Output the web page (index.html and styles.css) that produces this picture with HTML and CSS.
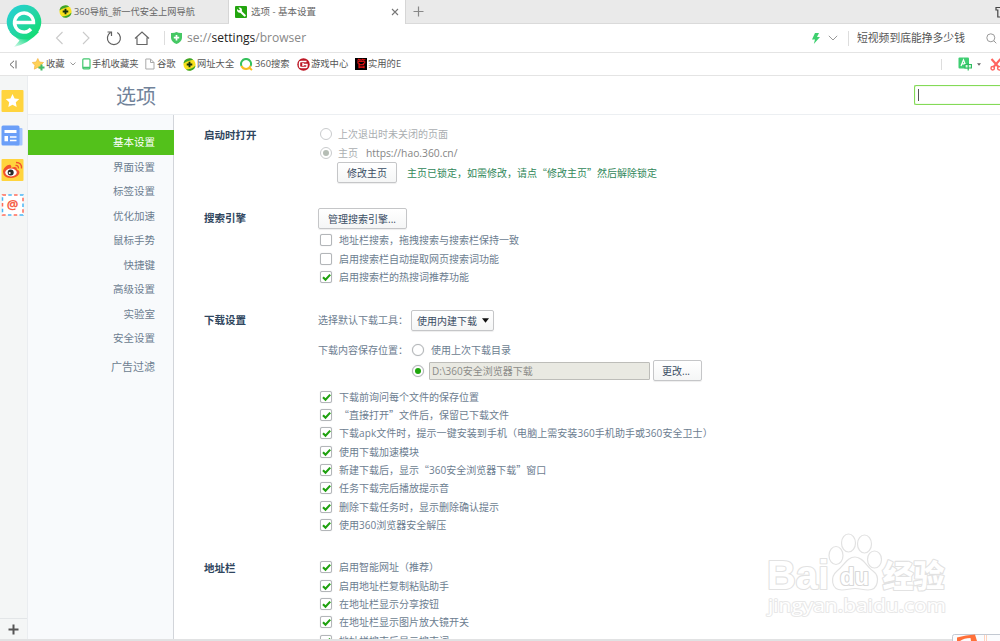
FILE: index.html
```html
<!DOCTYPE html>
<html lang="zh-CN">
<head>
<meta charset="utf-8">
<title>选项 - 基本设置</title>
<link rel="stylesheet" href="styles.css">
</head>
<body>
<svg class="defs" width="0" height="0">
  <defs>
    <symbol id="tick" viewBox="0 0 13 13"><path d="M3 6.2 5.5 8.8 10.2 3.6" fill="none" stroke="#1fa10f" stroke-width="2.1"/></symbol>
    <symbol id="nav360" viewBox="0 0 14 14"><circle cx="7" cy="7" r="6.500" fill="#f7e11c"/><path d="M.500 6A6.500 6.500 0 0 1 11 1.800C8 2.500 4 3.200 .500 6ZM13.500 8A6.500 6.500 0 0 1 3 12.300C7 12 11 11 13.500 8Z" fill="#3aa52c"/><path d="M7 4V10M4 7H10" stroke="#16310e" stroke-width="2"/></symbol>
  </defs>
</svg>

<div class="tabs">
  <div class="tab tab-idle"><svg width="13" height="13"><use href="#nav360"/></svg><span>360导航_新一代安全上网导航</span></div>
  <div class="tab tab-active">
    <svg width="12" height="12" viewBox="0 0 12 12"><rect width="12" height="12" rx="1" fill="#23a50f"/><path d="M5.500 5.500 9.700 9.500" stroke="#fff" stroke-width="2.200" stroke-linecap="round"/><path d="M2 3 4 4.600 5 3.500 3.500 1.700C6 1.200 7.600 3 6.800 5.300L5.300 6.700C3.300 7 1.600 5.500 2 3Z" fill="#fff"/></svg>
    <span class="tab-title">选项 - 基本设置</span>
    <svg width="8" height="8" viewBox="0 0 8 8"><path d="M1 1 7 7M7 1 1 7" stroke="#777" stroke-width="1.100"/></svg>
  </div>
  <div class="tab-new"><svg width="11" height="11" viewBox="0 0 11 11"><path d="M5.500 .500V10.500M.500 5.500H10.500" stroke="#888" stroke-width="1.200"/></svg></div>
  <svg class="skin" width="5" height="12" viewBox="0 0 5 12"><path d="M5 1.500H1V4H2.800V11H5" fill="none" stroke="#444" stroke-width="1.200"/></svg>
</div>

<div class="toolbar">
  <svg class="nav-icons" width="120" height="20" viewBox="0 0 120 20" fill="none">
    <path d="M12.500 4 6.500 10 12.500 16M33 4 39 10 33 16" stroke="#cacaca" stroke-width="1.100"/>
    <path d="M60.500 4.600A6.500 6.500 0 1 0 67.300 4.600M57.500 4H61.500V8" stroke="#606060" stroke-width="1.200"/>
    <path d="M85 10.500 92 4 99 10.500M87 9.500V16.500H97V9.500" stroke="#666" stroke-width="1.200"/>
    <path d="M114.500 3V17" stroke="#ddd"/>
  </svg>
  <svg class="shield" width="11" height="12" viewBox="0 0 11 12"><path d="M0 1Q3.500 1.200 5.500 0Q7.500 1.200 11 1V6Q10.500 10 5.500 12Q.500 10 0 6Z" fill="#45c864"/><path d="M5.500 3V8.500M2.800 5.700H8.200" stroke="#fff" stroke-width="1.700"/></svg>
  <div class="url">se://<b>settings</b>/browser</div>
  <svg class="bolt" width="8" height="11" viewBox="0 0 8 11"><path d="M3 0H7L5 4H8L1.800 11 3 6.500H0Z" fill="#3ed06f"/></svg>
  <svg class="chev" width="10" height="6" viewBox="0 0 10 6"><path d="M.800 .800 5 5 9.200 .800" fill="none" stroke="#999"/></svg>
  <i class="sep"></i>
  <div class="query">短视频到底能挣多少钱</div>
  <svg class="lens" width="11" height="11" viewBox="0 0 11 11"><circle cx="4.800" cy="4.800" r="4" fill="none" stroke="#999"/><path d="M7.700 7.700 10.300 10.300" stroke="#999"/></svg>
</div>

<div class="bookmarks">
  <svg class="collapse" width="8" height="9" viewBox="0 0 8 9"><path d="M5 .800 1 4.500 5 8.200M7 .500V8.500" fill="none" stroke="#666"/></svg>
  <div class="bm bm-fav"><svg width="13" height="13" viewBox="0 0 13 13"><path d="M5.800 .500 7.500 4 11.500 4.500 8.700 7.300 9.300 11.200 5.800 9.400 2.300 11.200 2.900 7.300 .200 4.500 4.100 4Z" fill="#ffd257" stroke="#f2ad35" stroke-width=".600"/><path d="M9.500 6.500V12.500M6.500 9.500H12.500" stroke="#44bd6c" stroke-width="2"/></svg><span>收藏</span><svg class="mini" width="6" height="4" viewBox="0 0 6 4"><path d="M.500 .500 3 3 5.500 .500" fill="none" stroke="#999"/></svg></div>
  <div class="bm bm-phone"><svg width="9" height="12" viewBox="0 0 9 12"><rect x=".800" y=".800" width="7.200" height="10" rx="1" fill="#fff" stroke="#43c76f" stroke-width="1.200"/><path d="M1 9.500H8" stroke="#43c76f" stroke-width="1.500"/></svg><span>手机收藏夹</span></div>
  <div class="bm bm-google"><svg width="10" height="12" viewBox="0 0 10 12"><path d="M.800 1H5.500L9 4.500V11H.800ZM5.500 1V4.500H9" fill="#fff" stroke="#aaa"/></svg><span>谷歌</span></div>
  <div class="bm bm-sites"><svg width="13" height="13"><use href="#nav360"/></svg><span>网址大全</span></div>
  <div class="bm bm-so"><svg width="13" height="13" viewBox="0 0 13 13"><path d="M1.500 8A5 5 0 1 1 10.600 8" fill="none" stroke="#35c15b" stroke-width="2"/><path d="M1.500 8A5 5 0 0 0 10.600 8M9.500 10 12 12" fill="none" stroke="#f8bd22" stroke-width="2"/></svg><span>360搜索</span></div>
  <div class="bm bm-game"><svg width="13" height="13" viewBox="0 0 13 13"><circle cx="6.500" cy="6.500" r="6.200" fill="#bd1724"/><path d="M9.500 3.500H4Q2.500 3.500 2.500 5V8Q2.500 9.500 4 9.500H9Q10 9.500 10 8V6.500H6M6 5V8" fill="none" stroke="#fff" stroke-width="1.400"/></svg><span>游戏中心</span></div>
  <div class="bm bm-tool"><span class="guan">管</span><span>实用的E</span></div>
  <i class="sep bm-sep"></i>
  <svg class="translate" width="14" height="14" viewBox="0 0 14 14"><rect x=".500" y=".500" width="10.500" height="11" rx="1" fill="#3fce72"/><path d="M3 9 5.500 2.800 7.500 8M4 6.800H7" fill="none" stroke="#fff" stroke-width="1.200"/><path d="M7 7.500H13.500V11H7ZM10.200 6V13.500" fill="#d9f7e3" stroke="#2ebd60" stroke-width="1.200"/></svg>
  <svg class="caret" width="4" height="3" viewBox="0 0 5 3"><path d="M0 0H5L2.500 3Z" fill="#666"/></svg>
  <svg class="scissors" width="12" height="13" viewBox="0 0 12 13" fill="none" stroke="#ff6460"><path d="M1.500 1 8.500 9M10.500 1 3.500 9" stroke-width="2.100"/><circle cx="2.700" cy="10.300" r="1.700" stroke-width="1.500"/><circle cx="9.300" cy="10.300" r="1.700" stroke-width="1.500"/></svg>
</div>

<div class="main">
  <div class="rail">
    <svg width="23" height="22" viewBox="0 0 23 22"><rect x=".500" width="22" height="22" rx="1" fill="#ffd43d"/><path d="M11.500 4 13.600 8.400 18.300 9 14.800 12.200 15.700 17 11.500 14.700 7.300 17 8.200 12.200 4.700 9 9.400 8.400Z" fill="#fff"/></svg>
    <svg width="23" height="22" viewBox="0 0 23 22"><rect x="14" y="3" width="7.500" height="17.500" rx="1" fill="#a5c5ff"/><rect x=".500" y=".500" width="18" height="20" rx="1.500" fill="#6b9ff8"/><path d="M9 12H15.500M9 15.500H15.500" stroke="#fff" stroke-width="1.600"/><path d="M3.500 5H15.500V8H3.500ZM3.500 11H7V16.300H3.500Z" fill="#fff"/></svg>
    <svg width="23" height="22" viewBox="0 0 23 22"><rect x=".500" width="22" height="22" rx="1" fill="#ffd43d"/><path d="M2 13C2 9 7 5 9.500 6Q11 7 10 9Q16 6.500 16 10.500Q19.500 12 18 15C16 19 9 20 5 18Q2 16 2 13Z" fill="#f1522d"/><ellipse cx="10" cy="13.500" rx="5.700" ry="3.900" fill="#fff"/><circle cx="9.700" cy="13.600" r="3" fill="#292929"/><circle cx="8.700" cy="14.100" r="1" fill="#fff"/><path d="M14.500 6.500Q17.500 6 17.500 9.500M15 3.500Q21 3.500 20.500 9.500" fill="none" stroke="#f1522d" stroke-width="1.300"/></svg>
    <div class="mail"><svg width="23" height="22" viewBox="0 0 23 22"><rect x="1.500" y="1" width="20.500" height="20" fill="#fff"/><rect x="1.500" y="1" width="20.500" height="20" fill="none" stroke="#ff6b58" stroke-width="1.500" stroke-dasharray="3.500 8.071"/><rect x="1.500" y="1" width="20.500" height="20" fill="none" stroke="#4ab6f5" stroke-width="1.500" stroke-dasharray="3.500 8.071" stroke-dashoffset="-5.785"/><text x="11.700" y="15.300" text-anchor="middle" class="at">@</text></svg></div>
    <div class="rail-add"><svg width="11" height="11" viewBox="0 0 11 11"><path d="M5.500 .500V10.500M.500 5.500H10.500" stroke="#555" stroke-width="2"/></svg></div>
  </div>
  <div class="page">
    <header class="head"><h1>选项</h1><div class="find"><i></i></div></header>
    <div class="cols">
      <nav class="menu">
        <a class="on">基本设置</a><a>界面设置</a><a>标签设置</a><a>优化加速</a><a>鼠标手势</a><a>快捷键</a><a>高级设置</a><a>实验室</a><a>安全设置</a><a class="ads">广告过滤</a>
      </nav>
      <div class="settings">
        <section class="s1"><h2>启动时打开</h2><div>
          <div class="row off"><i class="radio"></i>上次退出时未关闭的页面</div>
          <div class="row off"><i class="radio sel"></i>主页<span class="home">https://hao.360.cn/</span></div>
          <div class="lock"><span class="btn">修改主页</span><span class="green">主页已锁定，如需修改，请点<q>“</q>修改主页<q>”</q>然后解除锁定</span></div>
        </div></section>
        <section class="s2"><h2>搜索引擎</h2><div>
          <div class="btn manage">管理搜索引擎...</div>
          <div class="row"><i class="box"></i>地址栏搜索，拖拽搜索与搜索栏保持一致</div>
          <div class="row"><i class="box"></i>启用搜索栏自动提取网页搜索词功能</div>
          <div class="row"><i class="box"><svg><use href="#tick"/></svg></i>启用搜索栏的热搜词推荐功能</div>
        </div></section>
        <section class="s3"><h2>下载设置</h2><div>
          <div class="pick"><span>选择默认下载工具：</span><span class="btn select">使用内建下载<svg width="7" height="5" viewBox="0 0 8 5"><path d="M0 0H8L4 5Z" fill="#111"/></svg></span></div>
          <div class="place"><span>下载内容保存位置：</span><i class="radio"></i>使用上次下载目录</div>
          <div class="path"><i class="radio sel"></i><span class="field">D:\360安全浏览器下载</span><span class="btn change">更改...</span></div>
          <div class="row"><i class="box"><svg><use href="#tick"/></svg></i>下载前询问每个文件的保存位置</div>
          <div class="row"><i class="box"><svg><use href="#tick"/></svg></i><q>“</q>直接打开<q>”</q>文件后，保留已下载文件</div>
          <div class="row wide"><i class="box"><svg><use href="#tick"/></svg></i>下载apk文件时，提示一键安装到手机（电脑上需安装360手机助手或360安全卫士）</div>
          <div class="row"><i class="box"><svg><use href="#tick"/></svg></i>使用下载加速模块</div>
          <div class="row"><i class="box"><svg><use href="#tick"/></svg></i>新建下载后，显示<q>“</q>360安全浏览器下载<q>”</q>窗口</div>
          <div class="row"><i class="box"><svg><use href="#tick"/></svg></i>任务下载完后播放提示音</div>
          <div class="row"><i class="box"><svg><use href="#tick"/></svg></i>删除下载任务时，显示删除确认提示</div>
          <div class="row"><i class="box"><svg><use href="#tick"/></svg></i>使用360浏览器安全解压</div>
        </div></section>
        <section class="s4"><h2>地址栏</h2><div>
          <div class="row"><i class="box"><svg><use href="#tick"/></svg></i>启用智能网址（推荐）</div>
          <div class="row"><i class="box"><svg><use href="#tick"/></svg></i>启用地址栏复制粘贴助手</div>
          <div class="row"><i class="box"><svg><use href="#tick"/></svg></i>在地址栏显示分享按钮</div>
          <div class="row"><i class="box"><svg><use href="#tick"/></svg></i>在地址栏显示图片放大镜开关</div>
          <div class="row"><i class="box"><svg><use href="#tick"/></svg></i>地址栏搜索后显示搜索词</div>
        </div></section>
      </div>
    </div>
  </div>
</div>
<div class="status"></div>

<svg class="logo" width="40" height="46" viewBox="0 0 40 46">
  <defs>
    <linearGradient id="lg" x1="0" y1="0" x2="1" y2="1"><stop offset="0" stop-color="#25d0dc"/><stop offset=".5" stop-color="#25d5a8"/><stop offset="1" stop-color="#0be05e"/></linearGradient>
    <linearGradient id="tail" x1="1" y1="0" x2="0" y2="1"><stop offset="0" stop-color="#12dc68"/><stop offset=".5" stop-color="#20dc8c"/><stop offset="1" stop-color="#fff"/></linearGradient>
  </defs>
  <path d="M5.500 29 15.500 37.500 10 44Q24 41 35 29L24 24Z" fill="url(#tail)"/>
  <circle cx="20" cy="19" r="17.300" fill="url(#lg)"/>
  <path d="M10.500 19.500H29.500A9.500 9.500 0 1 0 27 26" fill="none" stroke="#fff" stroke-width="3.400"/>
</svg>

<svg class="watermark" width="190" height="96" viewBox="762 528 190 96">
  <g class="wm">
    <text class="wm-bai" x="767" y="589" textLength="62" lengthAdjust="spacingAndGlyphs">Bai</text>
    <ellipse cx="836" cy="555.500" rx="7" ry="9"/><ellipse cx="848.500" cy="543" rx="7" ry="9"/><ellipse cx="864.500" cy="544" rx="7" ry="9"/><ellipse cx="874.500" cy="559.500" rx="7" ry="8.500"/>
    <path d="M855 557C863 557 867 567 873 571C880 576 879 590 868 590C863 590 860 588.500 855 588.500S847 590 842 590C831 590 830 577 837 571C844 566 847 557 855 557Z"/>
    <text class="wm-du" x="840" y="584.500" textLength="29" lengthAdjust="spacingAndGlyphs">du</text>
    <text class="wm-cn" x="882.500" y="586.500" textLength="62" lengthAdjust="spacingAndGlyphs">经验</text>
    <text class="wm-url" x="768" y="612" textLength="178" lengthAdjust="spacingAndGlyphs">jingyan.baidu.com</text>
  </g>
</svg>

<svg class="ime" width="48" height="7" viewBox="0 0 48 7"><rect x=".500" y=".500" width="54" height="12" rx="2" fill="#fbfcfe" stroke="#c3c9d2"/><path d="M5 3.500Q14 1 23 .500L25 7H19L18.500 4Q12 4 8 7H5Z" fill="#ff7039"/><path d="M32.500 1V7M34.500 1V7" stroke="#ffd3be"/></svg>
</body>
</html>
```
FILE: styles.css
```css
* { box-sizing: border-box; }
html, body { margin: 0; height: 641px; overflow: hidden; }
body {
  position: relative;
  width: 1000px;
  display: flex;
  flex-direction: column;
  background: #fff;
  font: 10px/18px "Open Sans", "Noto Sans CJK SC", sans-serif;
  color: #6c7d90;
  white-space: nowrap;
}
svg { display: block; flex: none; }
i { font-style: normal; flex: none; }
h1, h2 { margin: 0; }
q { quotes: none; font-family: "Noto Sans CJK SC", sans-serif; }
.defs { position: absolute; }
.sep { width: 1px; height: 15px; background: #ddd; }

/* tab strip */
.tabs { height: 24px; flex: none; display: flex; background: #eaeaea; border-bottom: 1px solid #dadada; font-size: 9.2px; color: #666; }
.tab { display: flex; align-items: center; height: 23px; }
.tab-idle { width: 229px; padding-left: 59px; gap: 2px; border-right: 1px solid #d6d6d6; }
.tab-active { width: 177px; height: 24px; padding: 0 6px 1px 6px; background: #fff; border-right: 1px solid #d6d6d6; gap: 4px; }
.tab-title { flex: 1; font-size: 9.5px; }
.tab-new { padding: 6px 7px; }
.skin { margin: 6px 0 0 auto; }

/* address bar */
.toolbar { height: 29px; flex: none; display: flex; align-items: center; padding-left: 50px; border-bottom: 1px solid #e4e4e4; }
.shield { margin-left: 1px; }
.url { width: 629px; margin-left: 5px; font-size: 12.05px; color: #888; }
.url b { font-weight: 400; color: #222; }
.bolt { margin-left: -4px; }
.chev { margin-left: 8px; }
.toolbar .sep { margin-left: 10px; }
.query { width: 129px; padding-left: 8px; font-size: 10.8px; color: #555; }
.lens { margin-left: auto; margin-right: 3px; }

/* bookmarks bar */
.bookmarks { height: 23px; flex: none; display: flex; align-items: center; padding-left: 9px; border-bottom: 1px solid #e4e4e4; font-size: 9.3px; color: #555; }
.bm { display: flex; align-items: center; gap: 1px; }
.bm-fav { margin-left: 15px; width: 50px; }
.mini { margin-left: 4px; }
.bm-phone { width: 63px; }
.bm-google { width: 38px; gap: 2px; }
.bm-sites { width: 57px; }
.bm-so { width: 57px; gap: 2px; }
.bm-game { width: 58px; }
.bm-tool { width: 48px; }
.guan { width: 12px; height: 12px; background: #000; color: #e31212; font: 700 9px/12px "Noto Sans CJK SC", sans-serif; text-align: center; }
.bm-sep { margin-left: auto; height: 11px; }
.translate { margin-left: 16px; }
.caret { margin-left: 5px; }
.scissors { margin-left: 9px; margin-right: -2px; }

/* left rail */
.main { flex: 1; min-height: 0; display: flex; }
.rail { width: 28px; flex: none; display: flex; flex-direction: column; gap: 12.5px; padding: 14px 0 0 1px; background: #f4f6f6; border-right: 1px solid #eaedf0; }
.at { font: 700 13px "Open Sans", sans-serif; fill: #f5604a; }
.rail-add { margin: auto 0 0 -1px; height: 21px; padding: 5px 0 0 8px; border-top: 1px solid #e3e6e8; }

/* page */
.page { flex: 1; display: flex; flex-direction: column; min-width: 0; }
.head { height: 39px; flex: none; display: flex; align-items: center; border-bottom: 1px solid #eceff2; }
.head h1 { flex: 1; padding: 3px 0 0 88px; font-size: 20px; font-weight: 400; line-height: 36px; color: #71839a; }
.find { width: 87px; height: 20px; margin-right: -1px; padding: 3px; border: 1px solid #84da57; border-right: 0; border-radius: 2px 0 0 2px; box-shadow: inset 0 0 1px #84da57; }
.find i { display: block; width: 1px; height: 12px; background: #555; }
.cols { flex: 1; min-height: 0; display: flex; }
.menu { width: 146px; flex: none; padding-top: 15px; background: #f8fafc; border-right: 1px solid #d2d5da; }
.menu a { display: block; height: 24.5px; padding-right: 18px; font-size: 10.5px; line-height: 24px; text-align: right; }
.menu .on { margin-right: -1px; padding-right: 19px; background: #53c11b; color: #fff; }
.menu .ads { margin-top: 4px; font-size: 11px; }

.settings { flex: 1; min-width: 0; overflow: hidden; padding: 10px 0 0 30px; }
section { display: grid; grid-template-columns: 114px 1fr; align-content: start; }
h2 { font-size: 10.5px; line-height: 20px; font-weight: 700; color: #30465e; }
.s1 { height: 83px; }
.s2 { height: 102px; }
.s3 { height: 248px; }
.row { display: flex; align-items: center; height: 18.35px; }
.wide { letter-spacing: .06px; }
.box, .radio { width: 12px; height: 12px; margin: 0 7px 0 2px; border: 1px solid #b3b6b9; border-radius: 2px; background: #fff; box-shadow: 0 0 1px #c5c8ca; }
.box svg { width: 13px; height: 13px; margin: -1px; }
.radio { border-radius: 50%; display: grid; place-items: center; }
.radio.sel::after { content: ""; width: 6px; height: 6px; border-radius: 50%; background: #1ea60c; }
.off { color: #aaaeb1; }
.off .radio { border-color: #c9cbcd; box-shadow: none; margin-right: 6px; }
.off .radio.sel::after { background: #b5bdb5; }
.home { margin-left: 8px; font-size: 10.3px; color: #858585; }
.btn { display: inline-block; height: 21px; border: 1px solid #c5c6c8; border-radius: 2px; background: linear-gradient(#fff, #f5f6f6); box-shadow: 0 1px 1px #eee; color: #394c63; line-height: 20px; padding: 0 9px; }
.lock { display: flex; align-items: center; padding-left: 19px; gap: 10px; }
.lock .btn { width: 60px; }
.green { padding-top: 1px; color: #318759; }
.manage { display: block; width: 89px; margin-bottom: 2.3px; }
.pick { display: flex; gap: 3px; height: 21px; }
.pick > span:first-child { line-height: 20px; }
.select { width: 83px; padding: 0 4px 0 5px; display: flex; align-items: center; justify-content: space-between; }
.place { display: flex; align-items: center; height: 18px; margin-top: 10px; }
.place .radio { margin-left: 4px; }
.path { display: flex; align-items: center; height: 21px; margin: 1px 0 6.400px; }
.path .radio { margin: 0 5px 0 94px; }
.field { width: 221px; height: 18px; padding-left: 2px; line-height: 16px; background: #e9e9e2; border: 1px solid #bdbdb9; border-radius: 1px; color: #8b8b88; }
.change { width: 49px; margin-left: 3px; padding: 0 8px; }
.status { height: 2px; flex: none; background: #e1e2e3; }

/* overlays */
.logo { position: absolute; left: 4px; top: 3px; }
.watermark { position: absolute; left: 762px; top: 528px; }
.wm { fill: #fff; stroke: #e2e2e2; stroke-width: 1.200; }
.wm text { paint-order: stroke; stroke-width: 2.200; stroke-linejoin: round; }
.wm-bai { font: 700 40px "Liberation Sans", sans-serif; }
.wm .wm-du { font: 700 24px "Liberation Sans", sans-serif; stroke: #d8d8d8; }
.wm-cn { font: 900 31px "Noto Sans CJK SC", sans-serif; }
.wm .wm-url { font: 400 19px "Open Sans", sans-serif; stroke: #e8e8e8; stroke-width: 2; }
.ime { position: absolute; left: 952px; top: 634px; }
```
